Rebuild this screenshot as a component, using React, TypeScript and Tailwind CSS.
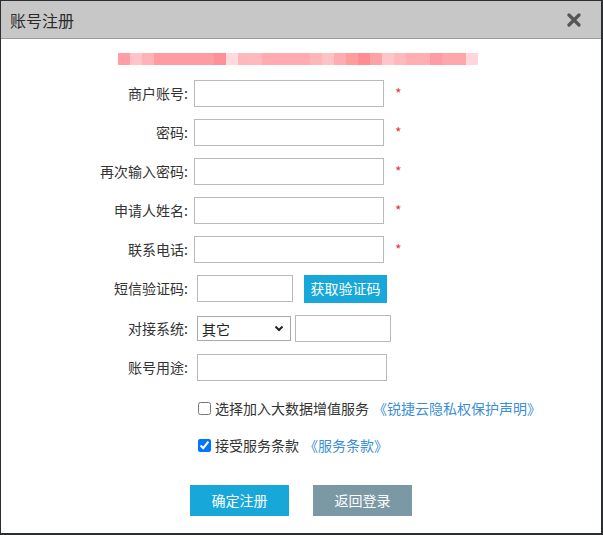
import { useState } from "react";

const mosaic = [
  "#ff9ea7", "#ffc3c8", "#ffb3b8", "#ff9ca2", "#ff9ca2", "#ff9ca2", "#ff9ca2", "#ff9ca2",
  "#ff9097", "#ffd9dd", "#ffb8bc", "#ffb8bc", "#ffabaf", "#ffabaf", "#ffabaf", "#ffabaf",
  "#ffb6b9", "#ffc2c5", "#ffacb1", "#ff9c9c", "#ff8d93", "#ffa2a7", "#ffc6c9", "#ffb9bc",
  "#ffaeb1", "#ffaeb1", "#ff9ba4", "#ffa6ab", "#ffa6ab", "#ffd6db",
];

function Field({ label, required = false }: { label: string; required?: boolean }) {
  return (
    <div className="mb-[12px] flex h-[27px] items-center">
      <span className="w-[187px] text-right text-[14px] text-[#333]">{label}</span>
      <input className="ml-[6px] h-[27px] w-[190px] border border-[#b9b9b9] bg-white px-1 text-[14px] outline-none" />
      {required ? <span className="ml-[11px] text-[14px] text-[#e8383d]">*</span> : null}
    </div>
  );
}

export default function App() {
  const [joinData, setJoinData] = useState(false);
  const [accept, setAccept] = useState(true);

  return (
    <div
      className="h-[535px] w-[603px] bg-[#2a2e33] pb-[2px] pl-[1px] pr-[2px] pt-[1px]"
      style={{ fontFamily: '"Noto Sans CJK SC", "Liberation Sans", sans-serif' }}
    >
      <div className="flex h-full flex-col bg-white">
        <div className="flex h-[38px] items-center justify-between border-b border-[#9c9c9c] bg-[#c7c7c7] pl-[9px] pr-[20px]">
          <span className="text-[16px] text-[#2b2b2b]">账号注册</span>
          <svg width="14" height="14" viewBox="0 0 14 14">
            <path d="M2 2 L12 12 M12 2 L2 12" stroke="#555" strokeWidth="3.2" strokeLinecap="round" />
          </svg>
        </div>

        <div className="mt-[14px] flex pl-[117px]">
          {mosaic.map((c, i) => (
            <div key={i} className="h-[12px] w-[12px]" style={{ backgroundColor: c }} />
          ))}
        </div>

        <div className="mt-[15px]">
          <Field label="商户账号:" required />
          <Field label="密码:" required />
          <Field label="再次输入密码:" required />
          <Field label="申请人姓名:" required />
          <Field label="联系电话:" required />

          <div className="mb-[13px] flex h-[27px] items-center">
            <span className="w-[187px] text-right text-[14px] text-[#333]">短信验证码:</span>
            <input className="ml-[9px] h-[27px] w-[96px] border border-[#b9b9b9] bg-white outline-none" />
            <button className="ml-[11px] h-[28px] w-[83px] bg-[#17a8d9] text-[14px] text-white">获取验证码</button>
          </div>

          <div className="mb-[12px] flex h-[27px] items-center">
            <span className="w-[187px] text-right text-[14px] text-[#333]">对接系统:</span>
            <div className="relative ml-[9px] h-[25px] w-[94px] border border-[#a9a9a9] bg-white">
              <span className="absolute left-[4px] top-[2px] text-[14px] text-[#222]">其它</span>
              <svg className="absolute right-[6px] top-[8px]" width="10" height="7" viewBox="0 0 10 7">
                <path d="M1.5 1.5 L5 5 L8.5 1.5" fill="none" stroke="#222" strokeWidth="2" />
              </svg>
            </div>
            <input className="ml-[4px] h-[27px] w-[96px] border border-[#b9b9b9] bg-white outline-none" />
          </div>

          <div className="flex h-[27px] items-center">
            <span className="w-[187px] text-right text-[14px] text-[#333]">账号用途:</span>
            <input className="ml-[9px] h-[27px] w-[190px] border border-[#b9b9b9] bg-white outline-none" />
          </div>

          <label className="mt-[17px] flex items-center pl-[197px] text-[14px] text-[#333]">
            <input
              type="checkbox"
              checked={joinData}
              onChange={(e) => setJoinData(e.target.checked)}
              className="m-0 h-[13px] w-[13px]"
            />
            <span className="ml-[4px]">选择加入大数据增值服务</span>
            <span className="ml-[4px] text-[#3a8fd6]">《锐捷云隐私权保护声明》</span>
          </label>

          <label className="mt-[16px] flex items-center pl-[197px] text-[14px] text-[#333]">
            <input
              type="checkbox"
              checked={accept}
              onChange={(e) => setAccept(e.target.checked)}
              className="m-0 h-[13px] w-[13px]"
            />
            <span className="ml-[4px]">接受服务条款</span>
            <span className="ml-[5px] text-[#3a8fd6]">《服务条款》</span>
          </label>

          <div className="mt-[29px] flex pl-[189px]">
            <button className="h-[31px] w-[99px] bg-[#17a8d9] text-[14px] text-white">确定注册</button>
            <button className="ml-[24px] h-[31px] w-[99px] bg-[#7b98a5] text-[14px] text-white">返回登录</button>
          </div>
        </div>
      </div>
    </div>
  );
}
